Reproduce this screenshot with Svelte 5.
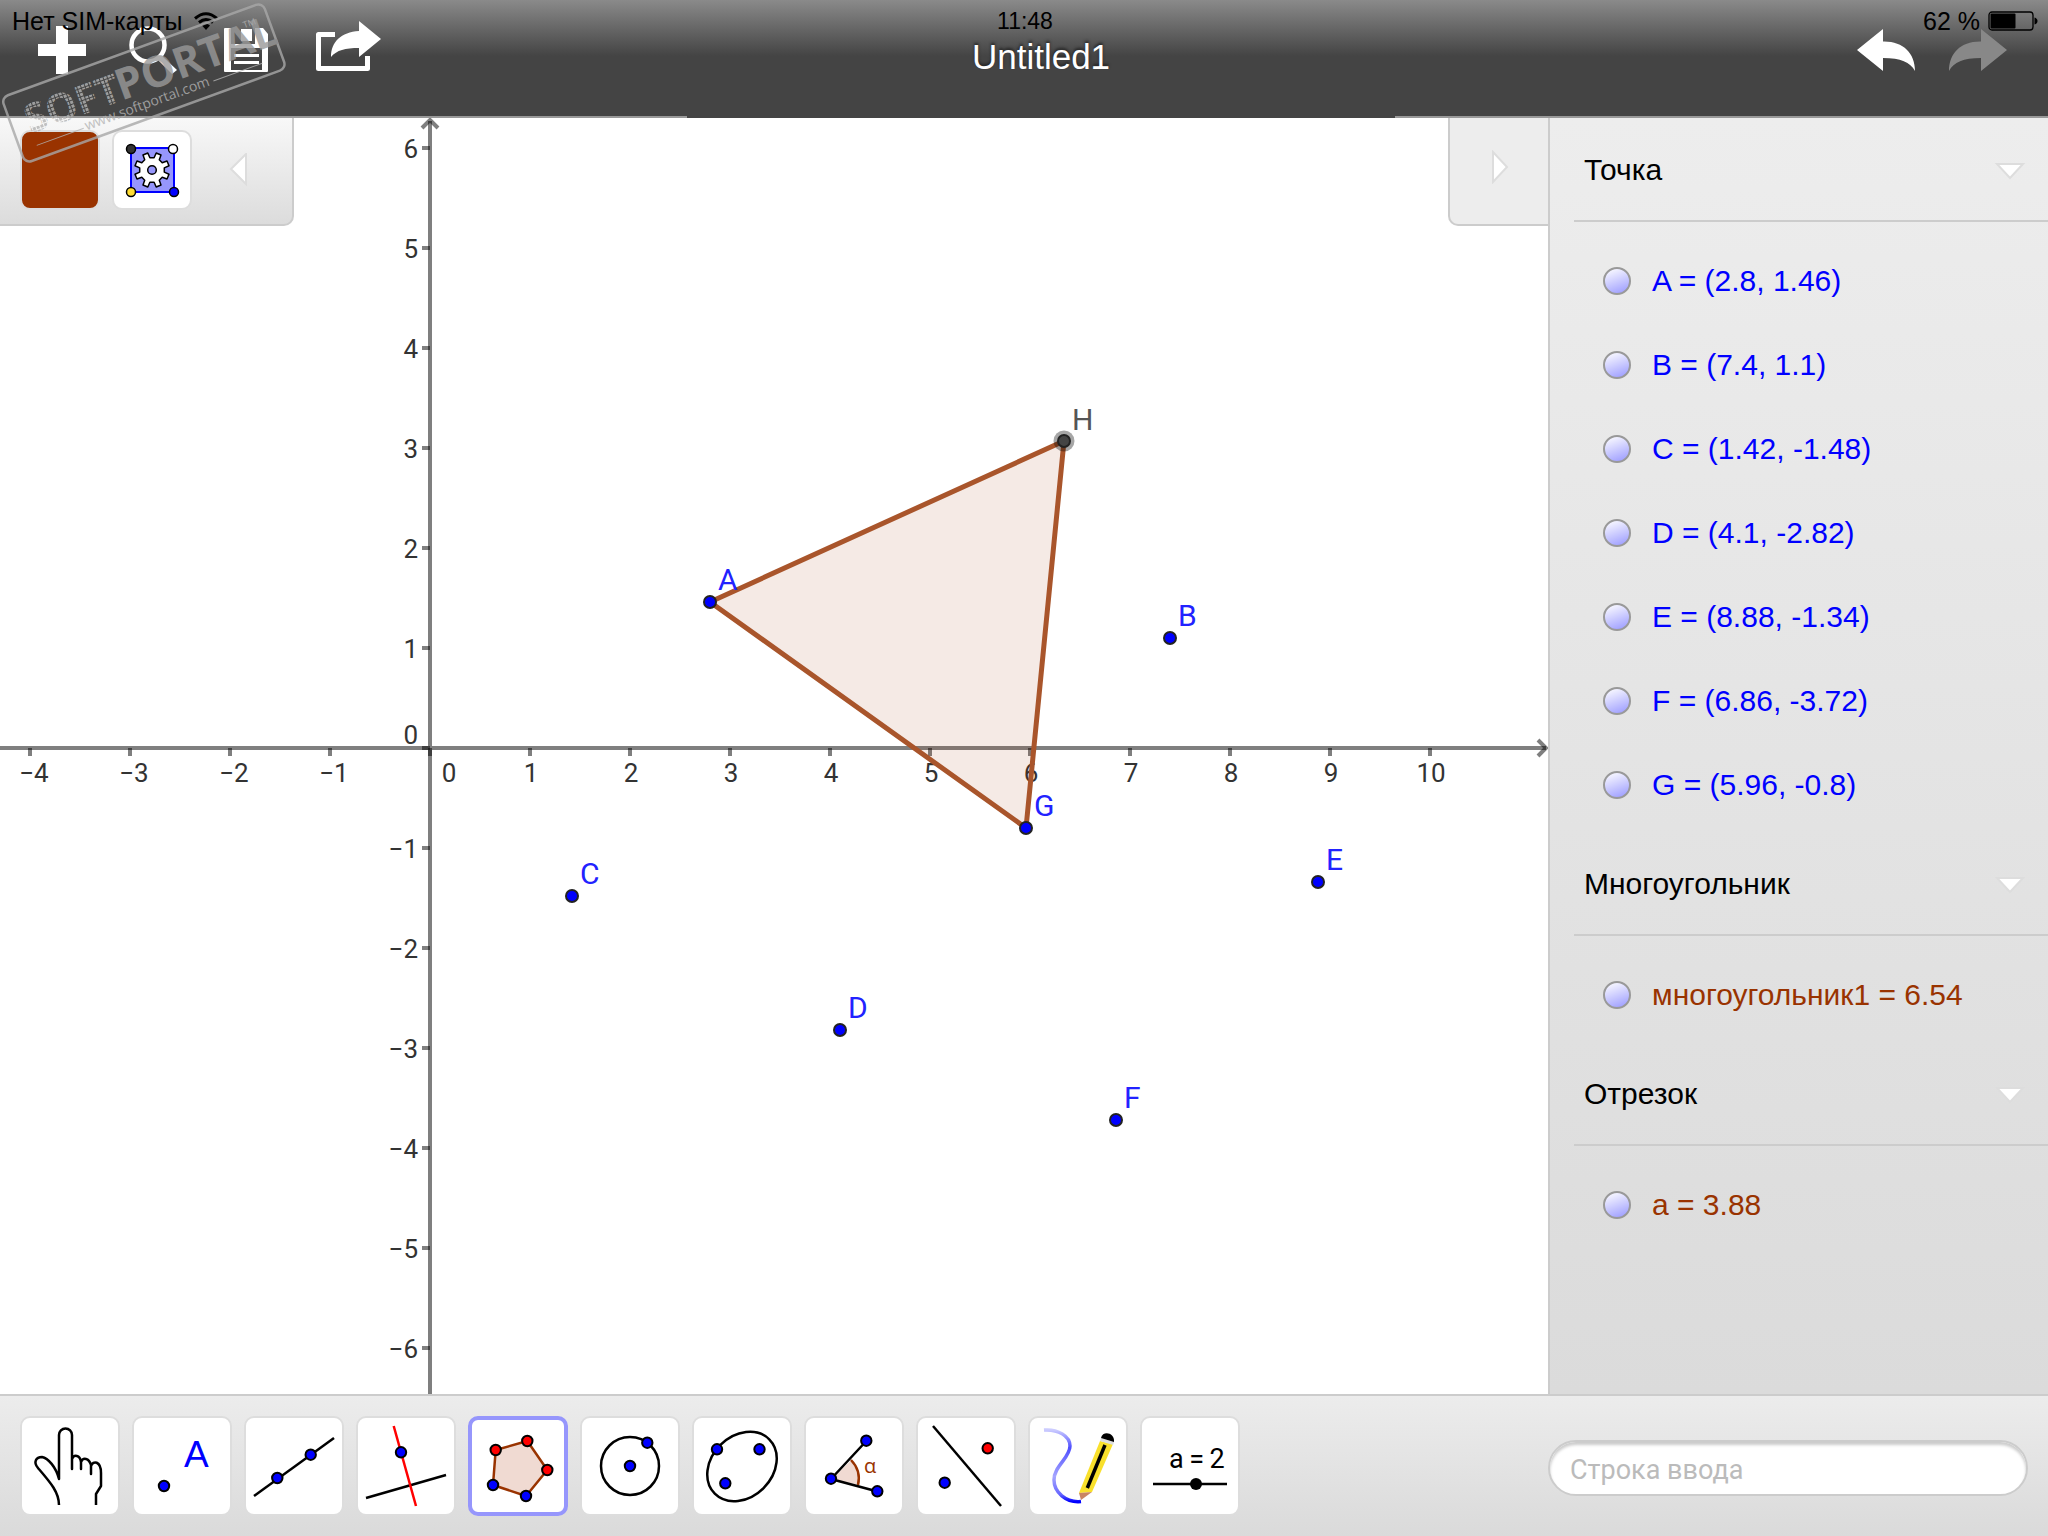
<script>
    const UNIT = 100;
    const ORIGIN = { x: 430, y: 630 };

    let canvasWidth = 1548;
    let canvasHeight = 1276;
    let activeTool = 'polygon';
    let command = '';

    const points = [
        { name: 'A', x: 2.8, y: 1.46 },
        { name: 'B', x: 7.4, y: 1.1 },
        { name: 'C', x: 1.42, y: -1.48 },
        { name: 'D', x: 4.1, y: -2.82 },
        { name: 'E', x: 8.88, y: -1.34 },
        { name: 'F', x: 6.86, y: -3.72 },
        { name: 'G', x: 5.96, y: -0.8 }
    ];
    const pointH = { name: 'H', x: 6.34, y: 3.07 };

    const groups = [
        {
            title: 'Точка',
            color: 'blue',
            items: points.map((p) => `${p.name} = (${p.x}, ${p.y})`)
        },
        { title: 'Многоугольник', color: 'brown', items: ['многоугольник1 = 6.54'] },
        { title: 'Отрезок', color: 'brown', items: ['a = 3.88'] }
    ];

    const tools = [
        { id: 'move', label: 'Перемещать' },
        { id: 'point', label: 'Точка' },
        { id: 'line', label: 'Прямая' },
        { id: 'perpendicular', label: 'Перпендикулярная прямая' },
        { id: 'polygon', label: 'Многоугольник' },
        { id: 'circle', label: 'Окружность' },
        { id: 'ellipse', label: 'Эллипс' },
        { id: 'angle', label: 'Угол' },
        { id: 'mirror', label: 'Отражение' },
        { id: 'pen', label: 'Карандаш' },
        { id: 'slider', label: 'Ползунок' }
    ];

    const xTicks = [-4, -3, -2, -1, 1, 2, 3, 4, 5, 6, 7, 8, 9, 10];
    const yTicks = [6, 5, 4, 3, 2, 1, -1, -2, -3, -4, -5, -6];

    const sx = (x) => ORIGIN.x + x * UNIT;
    const sy = (y) => ORIGIN.y - y * UNIT;
    const fmt = (n) => (n < 0 ? '−' + Math.abs(n) : String(n));

    const triangle = [points[0], pointH, points[6]]
        .map((p) => `${sx(p.x)},${sy(p.y)}`)
        .join(' ');

    // cog outline
    function gearPath(cx, cy, outer, inner, teeth) {
        const out = [];
        const step = (Math.PI * 2) / teeth;
        for (let i = 0; i < teeth; i++) {
            const a = (i + 0.5) * step;
            const corners = [[inner, -0.29], [outer, -0.19], [outer, 0.19], [inner, 0.29]];
            for (const [r, t] of corners) {
                out.push(`${(cx + r * Math.cos(a + t * step)).toFixed(1)} ${(cy + r * Math.sin(a + t * step)).toFixed(1)}`);
            }
        }
        return 'M' + out.join('L') + 'Z';
    }
    const gear = gearPath(40, 40, 17.5, 12.5, 8);
</script>

{#snippet dot(x, y, fill)}
    <circle cx={x} cy={y} r="5.2" {fill} stroke="#000" stroke-width="2" />
{/snippet}

<div class="app">
    <header class="topbar">
        <div class="status">
            <span class="carrier">
                Нет SIM-карты
                <svg width="24" height="18" viewBox="0 0 24 18" aria-hidden="true">
                    <g fill="none" stroke="#000" stroke-width="3">
                        <path d="M1 6.5Q12 -3 23 6.5" />
                        <path d="M5 10.5Q12 4.5 19 10.5" />
                    </g>
                    <path d="M8 13.5Q12 10 16 13.5L12 18Z" />
                </svg>
            </span>
            <time>11:48</time>
            <span class="charge">
                62 %
                <svg width="50" height="20" viewBox="0 0 50 20" aria-hidden="true">
                    <rect x="1" y="1" width="44" height="18" rx="3" fill="none" stroke="#000" stroke-width="1.3" />
                    <rect x="2.5" y="2.5" width="25" height="15" rx="1" />
                    <path d="M46.500 6.500q3 1 3 3.500t-3 3.500z" />
                </svg>
            </span>
        </div>

        <div class="actions left">
            <button aria-label="Создать">
                <svg width="64" height="60" viewBox="0 0 64 60"><path fill="#fff" d="M26 6h12v18h18v12H38v18H26V36H8V24h18z" /></svg>
            </button>
            <button aria-label="Поиск">
                <svg width="64" height="60" viewBox="0 0 64 60">
                    <circle cx="26" cy="25" r="16.5" fill="none" stroke="#fff" stroke-width="4.5" />
                    <path fill="#fff" d="M35 39l5-3 15 14-5 4z" />
                </svg>
            </button>
            <button aria-label="Сохранить">
                <svg width="64" height="60" viewBox="0 0 64 60">
                    <path fill="#fff" fill-rule="evenodd" d="M11 8h6v16h24V8h8l5 6v37q0 1-1 1H11q-1 0-1-1V9q0-1 1-1zM17 28v22h31V28z" />
                    <path fill="#fff" d="M27 9h11v12H27zM20 34h25v3H20zM20 41h25v3H20z" />
                </svg>
            </button>
            <button class="wide" aria-label="Поделиться">
                <svg width="72" height="60" viewBox="0 0 72 60">
                    <path fill="none" stroke="#fff" stroke-width="5" stroke-linejoin="round" d="M22 14.5H5.5v34h49V36" />
                    <path fill="#fff" d="M68 19L46 1v10C28 12 18 22 18 37c6-7 14-9 28-9v9z" />
                </svg>
            </button>
        </div>
        <h1>Untitled1</h1>
        <div class="actions right">
            <button aria-label="Отменить">
                <svg width="58" height="42" viewBox="0 0 58 42"><path fill="#fff" d="M0 21L26 0v12.5C46 12 58 24 58 42 53 33 44 29 26 29v13z" /></svg>
            </button>
            <button aria-label="Повторить" disabled>
                <svg width="58" height="42" viewBox="0 0 58 42"><path fill="#888" d="M58 21L32 0v12.5C12 12 0 24 0 42 5 33 14 29 32 29v13z" /></svg>
            </button>
        </div>
    </header>

    <main>
        <section class="graphics" bind:clientWidth={canvasWidth} bind:clientHeight={canvasHeight}>
            <svg class="plane" aria-label="Полотно">
                <g class="axes">
                    <path d="M0 {ORIGIN.y}H{canvasWidth - 2}M{ORIGIN.x} 3V{canvasHeight}" />
                    <path d="M{canvasWidth - 10} {ORIGIN.y - 8}L{canvasWidth - 2} {ORIGIN.y}L{canvasWidth - 10} {ORIGIN.y + 8}" />
                    <path d="M{ORIGIN.x - 8} 10L{ORIGIN.x} 2L{ORIGIN.x + 8} 10" />
                    {#each [0, ...xTicks] as t}
                        <path d="M{sx(t)} {ORIGIN.y}v8" />
                    {/each}
                    {#each [0, ...yTicks] as t}
                        <path d="M{ORIGIN.x} {sy(t)}h-8" />
                    {/each}
                </g>
                <g class="numbers">
                    {#each xTicks as t}
                        <text x={sx(t) + (t < 0 ? 4 : 1)} y={ORIGIN.y + 34} text-anchor="middle">{fmt(t)}</text>
                    {/each}
                    <text x={ORIGIN.x + 19} y={ORIGIN.y + 34} text-anchor="middle">0</text>
                    {#each yTicks as t}
                        <text x={ORIGIN.x - 12} y={sy(t) + 10} text-anchor="end">{fmt(t)}</text>
                    {/each}
                    <text x={ORIGIN.x - 12} y={ORIGIN.y - 4} text-anchor="end">0</text>
                </g>
                <polygon class="shape" points={triangle} />
                {#each points as p}
                    <circle class="point" cx={sx(p.x)} cy={sy(p.y)} r="6" />
                    <text class="name" x={sx(p.x) + 8} y={sy(p.y) - 12}>{p.name}</text>
                {/each}
                <circle cx={sx(pointH.x)} cy={sy(pointH.y)} r="10.5" fill="#000" fill-opacity="0.35" />
                <circle class="point dependent" cx={sx(pointH.x)} cy={sy(pointH.y)} r="6" />
                <text class="name dependent" x={sx(pointH.x) + 8} y={sy(pointH.y) - 11}>{pointH.name}</text>
            </svg>

            <div class="stylebar">
                <button class="tile swatch" aria-label="Цвет"></button>
                <button class="tile" aria-label="Фиксация на точках">
                    <svg width="80" height="80" viewBox="0 0 80 80">
                        <rect x="19" y="18" width="43" height="44" fill="#9696fc" stroke="#00f" stroke-width="2" />
                        <path d={gear} fill="#fff" stroke="#000" stroke-width="1.5" stroke-linejoin="round" />
                        <circle cx="40" cy="40" r="4.3" fill="#9696fc" stroke="#000" stroke-width="1.5" />
                        <g stroke="#000" stroke-width="1.5">
                            <circle cx="19" cy="19" r="4.5" fill="#333" />
                            <circle cx="61" cy="19" r="4.5" fill="#fff" />
                            <circle cx="19" cy="62" r="4.5" fill="#fd3" />
                            <circle cx="62" cy="62" r="4.5" fill="#00f" />
                        </g>
                    </svg>
                </button>
                <button class="collapse" aria-label="Свернуть">
                    <svg width="20" height="34" viewBox="0 0 20 34"><path class="chevron" d="M18 1v30L3 16z" /></svg>
                </button>
            </div>
            <button class="panel-toggle" aria-label="Скрыть панель объектов">
                <svg width="20" height="34" viewBox="0 0 20 34"><path class="chevron" d="M4 2v30L18 17z" /></svg>
            </button>
        </section>

        <aside class="algebra">
            {#each groups as group}
                <section>
                    <h2>
                        <button class="group-title">
                            {group.title}
                            <svg width="34" height="20" viewBox="0 0 34 20" aria-hidden="true"><path class="chevron" d="M4 4h26L17 18z" /></svg>
                        </button>
                    </h2>
                    <ul class={group.color}>
                        {#each group.items as item}
                            <li><label><input type="checkbox" checked />{item}</label></li>
                        {/each}
                    </ul>
                </section>
            {/each}
        </aside>
    </main>

    <footer class="toolbar">
        <div class="tools">
            {#each tools as tool}
                <button
                    class="tile tool"
                    class:active={activeTool === tool.id}
                    aria-label={tool.label}
                    on:click={() => (activeTool = tool.id)}
                >
                    <svg width="100" height="100" viewBox="0 0 100 100" fill="none" stroke="#000" stroke-width="2.5">
                        {#if tool.id === 'move'}
                            <path stroke-linejoin="round" d="M39 89C39 76 30 66 18 52c-5-6-2-11 4-11 6 1 14 10 17 22V19a6.5 6.5 0 0 1 13 0v34V43c2-5 8-4 9 3v7-7c2-5 8-4 10 3v9-8c2-6 10-5 10 7v13l-5 8v11" />
                        {:else if tool.id === 'point'}
                            <text x="52" y="51" font-family="Liberation Sans, sans-serif" font-size="37" fill="#00f" stroke="none">A</text>
                            {@render dot(32, 70, '#00f')}
                        {:else if tool.id === 'line'}
                            <path d="M10 80L90 22" />
                            {@render dot(33.3, 62, '#00f')}
                            {@render dot(66.7, 38.7, '#00f')}
                        {:else if tool.id === 'perpendicular'}
                            <path d="M10 82L90 59" />
                            <path d="M37.7 10L60 90" stroke="#f00" />
                            {@render dot(45, 36.3, '#00f')}
                        {:else if tool.id === 'polygon'}
                            <path d="M27.7 34L59.3 25 79.3 54 58 80 25 69z" fill="#f0dad2" stroke="#930" />
                            {@render dot(27.7, 34, '#f00')}
                            {@render dot(59.3, 25, '#f00')}
                            {@render dot(79.3, 54, '#f00')}
                            {@render dot(58, 80, '#00f')}
                            {@render dot(25, 69, '#00f')}
                        {:else if tool.id === 'circle'}
                            <circle cx="50" cy="50" r="29" />
                            {@render dot(50, 50, '#00f')}
                            {@render dot(67.3, 26.7, '#00f')}
                        {:else if tool.id === 'ellipse'}
                            <ellipse cx="50" cy="50.5" rx="38.5" ry="30.5" transform="rotate(-45 50 50.5)" />
                            {@render dot(25, 33.3, '#00f')}
                            {@render dot(67.5, 33.3, '#00f')}
                            {@render dot(33.3, 67.3, '#00f')}
                        {:else if tool.id === 'angle'}
                            <path d="M27 63L47.700 44A27 27 0 0 1 53.500 68.500z" fill="#f0dad2" stroke="none" />
                            <path d="M47 44A27 27 0 0 1 54 69" stroke="#930" />
                            <path d="M62.3 25L27 63l46.5 12.5" />
                            <text x="60" y="57" font-family="Open Sans, sans-serif" font-size="20" fill="#930" stroke="none">α</text>
                            {@render dot(27, 62.7, '#00f')}
                            {@render dot(62.3, 24.7, '#00f')}
                            {@render dot(73.3, 75.3, '#00f')}
                        {:else if tool.id === 'mirror'}
                            <path d="M17 10L85 90" />
                            {@render dot(71.7, 32.3, '#f00')}
                            {@render dot(28.7, 66.7, '#00f')}
                        {:else if tool.id === 'pen'}
                            <defs>
                                <linearGradient id="ink" x1="0" y1="0" x2="0" y2="1">
                                    <stop offset="0" stop-color="#00f" stop-opacity="0.2" />
                                    <stop offset="0.25" stop-color="#00f" stop-opacity="0.7" />
                                    <stop offset="0.65" stop-color="#00f" stop-opacity="0.35" />
                                    <stop offset="0.9" stop-color="#00f" stop-opacity="0.6" />
                                    <stop offset="1" stop-color="#00f" />
                                </linearGradient>
                            </defs>
                            <path stroke="url(#ink)" stroke-width="3.5" d="M16 14C30 13 42 20 42 30 42 42 26 50 26 64 26 76 38 87 53 85.5" />
                            <g stroke="none">
                                <path fill="#f9e02c" d="M72 25l13 3-21 48-13 1z" />
                                <path fill="#c98563" d="M51 77l13-1-11 8z" />
                                <path fill="#ddd" d="M73 22l13 4-1 3-13-4z" />
                                <path fill="#000" d="M73 22c2-8 14-5 13 4z" />
                            </g>
                            <path d="M77 29L59.3 72" stroke-width="3.5" />
                        {:else}
                            <text x="29" y="52" font-family="Roboto, sans-serif" font-size="27" fill="#000" stroke="none">a&#8201;=&#8201;2</text>
                            <path d="M13 68h74" />
                            <circle cx="56" cy="68" r="6" fill="#000" stroke="none" />
                        {/if}
                    </svg>
                </button>
            {/each}
        </div>
        <input class="command" type="text" placeholder="Строка ввода" aria-label="Строка ввода" bind:value={command} />
    </footer>

    <svg class="stamp" width="290" height="168" viewBox="0 0 290 168" aria-hidden="true">
        <defs>
            <pattern id="grain" width="4" height="4" patternUnits="userSpaceOnUse">
                <rect width="3" height="3" fill="#b4b4b4" />
            </pattern>
        </defs>
        <g transform="translate(0 97) rotate(-20)">
            <rect x="1" y="1" width="278" height="70" rx="7" fill="none" stroke="#a8a8a8" stroke-width="2.5" />
            <g font-family="Liberation Sans Narrow, Open Sans, sans-serif" font-weight="700">
                <text x="16" y="45" font-size="40" fill="url(#grain)">SOFT</text>
                <text x="113" y="45" font-size="43" fill="#999">PORTAL</text>
            </g>
            <g font-family="Open Sans, sans-serif" fill="#b4b4b4">
                <text x="70" y="61" font-size="14">www.softportal.com</text>
                <text x="253" y="19" font-size="9">TM</text>
            </g>
            <path d="M18 58h50M206 58h52" stroke="#b4b4b4" />
        </g>
    </svg>
</div>

<style>
    :global(body) {
        margin: 0;
    }

    .app {
        position: relative;
        display: flex;
        flex-direction: column;
        min-height: 100vh;
        background: #fff;
        font-family: "Liberation Sans", Arial, sans-serif;
        color: #000;
    }

    button {
        margin: 0;
        padding: 0;
        border: none;
        background: none;
        font: inherit;
        color: inherit;
        cursor: pointer;
    }

    svg {
        display: block;
    }

    /* top bar */
    .topbar {
        position: relative;
        display: grid;
        grid-template-columns: 687px 1fr 653px;
        height: 118px;
        background: linear-gradient(#8a8a8a, #444 56px);
    }

    .status {
        position: absolute;
        top: 0;
        left: 0;
        right: 0;
        z-index: 1;
        display: grid;
        grid-template-columns: 1fr auto 1fr;
        padding: 0 10px 0 12px;
        font-size: 25px;
        line-height: 42px;
        pointer-events: none;
    }

    .status time {
        font-size: 23px;
    }

    .carrier,
    .charge {
        display: flex;
        align-items: center;
        gap: 12px;
    }

    .charge {
        justify-content: flex-end;
        gap: 8px;
    }

    .actions {
        display: flex;
        align-items: flex-start;
        padding-top: 20px;
        border-bottom: 2px solid #999;
    }

    .actions button {
        display: flex;
        align-items: center;
        justify-content: center;
        height: 60px;
    }

    .left {
        padding-left: 16px;
    }

    .left button {
        width: 92px;
    }

    .left .wide {
        width: 114px;
    }

    .right {
        justify-content: flex-end;
        gap: 34px;
        padding-right: 41px;
    }

    h1 {
        margin: 0;
        padding-top: 37px;
        font-size: 35px;
        font-weight: 400;
        line-height: 40px;
        text-align: center;
        color: #fff;
        text-shadow: 0 -2px 3px #222;
    }

    /* graphics view */
    main {
        flex: 1;
        display: flex;
    }

    .graphics {
        position: relative;
        flex: 1;
        min-width: 0;
        overflow: hidden;
    }

    .plane {
        position: absolute;
        width: 100%;
        height: 100%;
        font-family: Roboto, sans-serif;
    }

    .axes {
        fill: none;
        stroke: #000;
        stroke-opacity: 0.5;
        stroke-width: 4;
    }

    .numbers {
        font-size: 26px;
        fill: #333;
    }

    .shape {
        fill: #930;
        fill-opacity: 0.1;
        stroke: #a9552b;
        stroke-width: 5;
        stroke-linejoin: round;
    }

    .point {
        fill: #00f;
        stroke: #222;
        stroke-width: 2;
    }

    .point.dependent {
        fill: #444;
    }

    .name {
        font-size: 30px;
        fill: #22f;
    }

    .name.dependent {
        fill: #555;
    }

    .chevron {
        fill: #fff;
        stroke: #ddd;
        stroke-width: 2;
    }

    .stylebar {
        position: absolute;
        top: 0;
        left: 0;
        display: flex;
        align-items: flex-start;
        gap: 12px;
        padding: 12px 44px 14px 20px;
        border: solid #ccc;
        border-width: 0 2px 2px 0;
        border-radius: 0 0 10px 0;
        background: linear-gradient(#f8f8f8, #dcdcdc);
    }

    .tile {
        box-sizing: border-box;
        display: flex;
        align-items: center;
        justify-content: center;
        width: 80px;
        height: 80px;
        border: 2px solid #ddd;
        border-radius: 10px;
        background: #fff;
    }

    .tile svg {
        flex: none;
    }

    .swatch {
        background: #930;
    }

    .collapse {
        align-self: center;
        padding-left: 24px;
    }

    .panel-toggle {
        position: absolute;
        top: 0;
        right: 0;
        display: flex;
        align-items: center;
        justify-content: center;
        box-sizing: border-box;
        width: 100px;
        height: 108px;
        padding-bottom: 8px;
        border: solid #ccc;
        border-width: 0 0 2px 2px;
        border-radius: 0 0 0 10px;
        background: #ededed;
    }

    /* algebra view */
    .algebra {
        box-sizing: border-box;
        width: 500px;
        border-left: 2px solid #ccc;
        background: linear-gradient(#ededed, #dbdbdb);
        font-size: 30px;
    }

    h2 {
        margin: 0 0 0 24px;
        border-bottom: 2px solid #ccc;
        font-size: 30px;
        font-weight: 400;
    }

    .group-title {
        display: flex;
        align-items: center;
        justify-content: space-between;
        width: 100%;
        height: 102px;
        padding: 2px 21px 0 10px;
    }

    ul {
        margin: 0;
        padding: 17px 0 5px;
        list-style: none;
    }

    li label {
        display: flex;
        align-items: center;
        gap: 21px;
        height: 84px;
        padding-left: 53px;
    }

    li input {
        appearance: none;
        box-sizing: border-box;
        width: 28px;
        height: 28px;
        margin: 0;
        border: 2px solid #999;
        border-radius: 50%;
        background: linear-gradient(160deg, #fff, #ccf 50%, #99f);
    }

    .blue {
        color: #00f;
    }

    .brown {
        color: #930;
    }

    /* bottom bar */
    .toolbar {
        display: flex;
        align-items: flex-start;
        justify-content: space-between;
        padding: 20px;
        border-top: 2px solid #ccc;
        background: linear-gradient(#ececec, #dadada);
    }

    .tools {
        display: flex;
        gap: 12px;
    }

    .tool {
        width: 100px;
        height: 100px;
    }

    .tool.active {
        border: 4px solid #9696fc;
    }

    .command {
        box-sizing: border-box;
        width: 480px;
        height: 56px;
        margin: 24px 0 0;
        padding: 4px 20px 0;
        border: 2px solid #ccc;
        border-radius: 28px;
        outline: none;
        background: #fff;
        box-shadow: inset 0 3px 3px #ccc;
        font-family: Roboto, sans-serif;
        font-size: 27px;
    }

    .command::placeholder {
        color: #bbb;
    }

    .stamp {
        position: absolute;
        top: 0;
        left: 0;
        z-index: 2;
        opacity: 0.8;
        pointer-events: none;
    }
</style>
